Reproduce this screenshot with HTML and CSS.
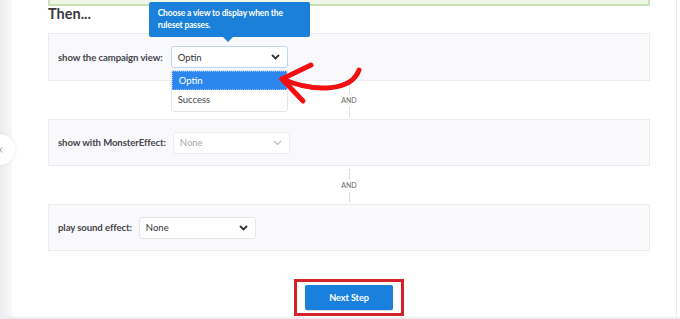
FILE: index.html
```html
<!DOCTYPE html>
<html>
<head>
<meta charset="utf-8">
<link rel="stylesheet" href="styles.css">
</head>
<body>
<div class="page">
  <div class="side"><div class="toggle"><svg width="4" height="6" viewBox="0 0 4 6"><path d="M3 0.5L1 3l2 2.5" fill="none" stroke="#999" stroke-width="1"/></svg></div></div>
  <div class="main">
    <div class="content">
      <div class="notice"></div>
      <h2 class="title">Then...</h2>

      <div class="panel panel-first">
        <span class="label">show the campaign view:</span>
        <div class="select-wrap">
          <div class="select focused">
            <span>Optin</span>
            <svg class="chev" width="9" height="6" viewBox="0 0 9 6"><path d="M1 1l3.5 3.5L8 1" fill="none" stroke="#333" stroke-width="1.8"/></svg>
          </div>
          <div class="tooltip">Choose a view to display when the ruleset passes.</div>
          <ul class="options">
            <li class="active">Optin</li>
            <li>Success</li>
          </ul>
        </div>
        <svg class="arrow" width="100" height="50" viewBox="270 58 100 50">
          <path d="M359 70 C 352 90, 318 94, 282 79" fill="none" stroke="#f20f12" stroke-width="5" stroke-linecap="round"/>
          <path d="M311 65 L282 79 L303 101" fill="none" stroke="#f20f12" stroke-width="5" stroke-linecap="round" stroke-linejoin="round"/>
        </svg>
      </div>

      <div class="and"><span class="dash"></span><span class="and-text">AND</span><span class="dash"></span></div>

      <div class="panel">
        <span class="label">show with MonsterEffect:</span>
        <div class="select disabled">
          <span>None</span>
          <svg class="chev" width="9" height="6" viewBox="0 0 9 6"><path d="M1 1l3.5 3.5L8 1" fill="none" stroke="#bbb" stroke-width="1.2"/></svg>
        </div>
      </div>

      <div class="and"><span class="dash"></span><span class="and-text">AND</span><span class="dash"></span></div>

      <div class="panel">
        <span class="label">play sound effect:</span>
        <div class="select">
          <span>None</span>
          <svg class="chev" width="9" height="6" viewBox="0 0 9 6"><path d="M1 1l3.5 3.5L8 1" fill="none" stroke="#333" stroke-width="1.8"/></svg>
        </div>
      </div>

      <div class="actions">
        <div class="highlight"><button class="next">Next Step</button></div>
      </div>
    </div>
  </div>
</div>
</body>
</html>
```
FILE: styles.css
```css
* { box-sizing: border-box; }
html, body { margin: 0; padding: 0; background: #fff; }
body { font-family: Lato, "Liberation Sans", sans-serif; color: #3e3e44; }

.page {
  display: flex;
  width: 680px;
  height: 319px;
  overflow: hidden;
  border-bottom: 2px solid #eeeef1;
}
.side {
  position: relative;
  width: 12px;
  flex: none;
  background: linear-gradient(to right, #ededf0, #f8f8fa);
}
.toggle {
  position: absolute;
  left: -16px;
  top: 134px;
  width: 31px;
  height: 31px;
  border-radius: 50%;
  background: #fff;
  box-shadow: 0 0 4px rgba(0,0,0,0.08);
  display: flex;
  align-items: center;
  justify-content: flex-end;
  padding-right: 12px;
}
.toggle svg { display: block; }
.main {
  width: 665px;
  flex: none;
  border-right: 1px solid #ececf0;
  padding-left: 36px;
}
.content {
  width: 602px;
  display: flex;
  flex-direction: column;
}
.notice {
  height: 6px;
  background: #eef7e6;
  border: 2px solid #c9e1b5;
  border-top: none;
  border-radius: 0 0 2px 2px;
}
.title {
  margin: 0;
  height: 27px;
  font-size: 14.5px;
  font-weight: 700;
  color: #3a3a40;
  line-height: 16px;
}
.panel {
  position: relative;
  display: flex;
  align-items: center;
  gap: 7px;
  height: 47px;
  padding-left: 9px;
  background: #f9f9fc;
  border: 1px solid #ebebf2;
}
.panel-first { height: 48px; gap: 8px; }
.label {
  font-size: 9.6px;
  font-weight: 700;
  color: #45454b;
  letter-spacing: -0.1px;
}
.select-wrap { position: relative; }
.select {
  display: flex;
  align-items: center;
  justify-content: space-between;
  width: 117px;
  height: 22px;
  padding: 0 7px 0 6px;
  background: #fff;
  border: 1px solid #e6e6ec;
  border-radius: 3px;
  font-size: 9.5px;
  color: #333;
}
.select.focused { border-color: #bcd6f2; }
.select.disabled { color: #aaa; border-color: #ececf1; }
.chev { display: block; }

.tooltip {
  position: absolute;
  left: -22px;
  top: -44px;
  width: 161px;
  height: 35px;
  padding: 6px 9px 0 9px;
  background: #1a80da;
  color: #fff;
  font-size: 8.5px;
  font-weight: 700;
  letter-spacing: -0.15px;
  line-height: 11.5px;
  border-radius: 2px;
}
.tooltip::after {
  content: "";
  position: absolute;
  left: 74px;
  bottom: -5px;
  border-left: 5px solid transparent;
  border-right: 5px solid transparent;
  border-top: 5px solid #1a80da;
}
.options {
  position: absolute;
  left: 0;
  top: 24px;
  width: 117px;
  margin: 0;
  padding: 0 0 2px 0;
  list-style: none;
  background: #fff;
  border: 1px solid #e4e4ea;
  border-radius: 0 0 3px 3px;
  z-index: 2;
  font-size: 9.5px;
  color: #444;
}
.options li {
  height: 19px;
  line-height: 19px;
  padding-left: 6px;
}
.options li.active {
  background: #2d86ee;
  color: #fff;
  border: 1px dotted #8fbdf3;
  line-height: 17px;
}
.arrow {
  position: absolute;
  left: 221px;
  top: 24px;
  z-index: 3;
}

.and {
  height: 38px;
  display: flex;
  flex-direction: column;
  align-items: center;
  justify-content: center;
  gap: 2px;
}
.dash {
  width: 1px;
  height: 10px;
  border-left: 1px dashed #d8d8dd;
}
.and-text {
  font-size: 7px;
  color: #666;
  line-height: 9px;
}

.actions {
  display: flex;
  justify-content: center;
  padding-top: 28px;
}
.highlight {
  padding: 3px 8px;
  border: 3px solid #d3222a;
}
.next {
  display: block;
  width: 88px;
  height: 25px;
  border: none;
  border-radius: 2px;
  background: #1a80de;
  color: #fff;
  font-family: Lato, "Liberation Sans", sans-serif;
  font-size: 9.2px;
  font-weight: 700;
  letter-spacing: -0.1px;
  box-shadow: 0 1px 1px rgba(0,0,0,0.15);
}
```
